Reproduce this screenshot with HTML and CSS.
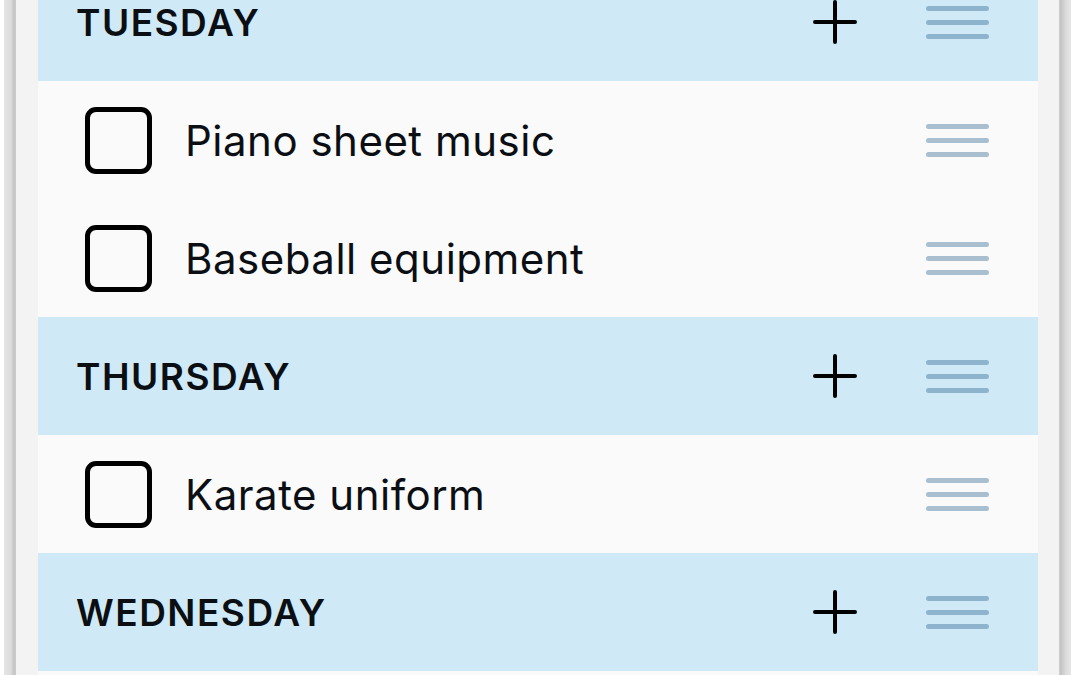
FILE: index.html
```html
<!DOCTYPE html>
<html lang="en">
<head>
  <meta charset="UTF-8">
  <meta name="viewport" content="width=device-width, initial-scale=1.0">
  <title>Packing list</title>
  <link rel="stylesheet" href="styles.css">
</head>
<body>
  <!-- Рамка телефона -->
  <div class="device">
    <div class="screen">
      <div class="list">

        <div class="day-header">
          <span class="day-title">TUESDAY</span>
          <svg class="add-icon" viewBox="0 0 44 44"><path d="M22 2v40M2 22h40"/></svg>
          <svg class="grip grip-dark" viewBox="0 0 63 33"><path d="M2.5 2.5h58M2.5 16.5h58M2.5 30.5h58"/></svg>
        </div>
        <div class="item">
          <span class="check"></span>
          <span class="item-title">Piano sheet music</span>
          <svg class="grip" viewBox="0 0 63 33"><path d="M2.5 2.5h58M2.5 16.5h58M2.5 30.5h58"/></svg>
        </div>
        <div class="item">
          <span class="check"></span>
          <span class="item-title">Baseball equipment</span>
          <svg class="grip" viewBox="0 0 63 33"><path d="M2.5 2.5h58M2.5 16.5h58M2.5 30.5h58"/></svg>
        </div>

        <div class="day-header">
          <span class="day-title">THURSDAY</span>
          <svg class="add-icon" viewBox="0 0 44 44"><path d="M22 2v40M2 22h40"/></svg>
          <svg class="grip grip-dark" viewBox="0 0 63 33"><path d="M2.5 2.5h58M2.5 16.5h58M2.5 30.5h58"/></svg>
        </div>
        <div class="item">
          <span class="check"></span>
          <span class="item-title">Karate uniform</span>
          <svg class="grip" viewBox="0 0 63 33"><path d="M2.5 2.5h58M2.5 16.5h58M2.5 30.5h58"/></svg>
        </div>

        <div class="day-header">
          <span class="day-title">WEDNESDAY</span>
          <svg class="add-icon" viewBox="0 0 44 44"><path d="M22 2v40M2 22h40"/></svg>
          <svg class="grip grip-dark" viewBox="0 0 63 33"><path d="M2.5 2.5h58M2.5 16.5h58M2.5 30.5h58"/></svg>
        </div>
        <div class="item"></div>

      </div>
    </div>
  </div>
</body>
</html>
```

FILE: styles.css
```css
:root {
  --header-bg: #cfeaf6;
  --item-bg: #fafafa;
  --frame-bg: #f3f3f3;
  --text-color: #0b0f14;
  --grip-light: #a9bfd0;
  --grip-dark: #8db3cd;
}

html,
body {
  margin: 0;
  padding: 0;
  height: 100%;
  overflow: hidden;
  background: #fff;
  font-family: 'Inter', 'Noto Sans', sans-serif;
  color: var(--text-color);
}

.device {
  margin-left: 4px;
  width: 1067px;
  height: 100%;
  padding: 0 12px;
  box-sizing: border-box;
  background: linear-gradient(to right,
    #e6e6e6 0, #dcdcdc 7px, #c4c4c4 10px, #cdcdcd 12px,
    transparent 12px, transparent calc(100% - 12px),
    #cdcdcd calc(100% - 12px), #c4c4c4 calc(100% - 10px), #dcdcdc calc(100% - 5px), #e6e6e6 100%);
}

.screen {
  height: 100%;
  padding: 0 21px 0 22px;
  background: var(--frame-bg);
  overflow: hidden;
}

/* список прокручен: верх первого заголовка уходит за край */
.list {
  margin-top: -37px;
}

.day-header,
.item {
  height: 118px;
  display: flex;
  align-items: center;
  padding-right: 49px;
}

.day-header {
  background: var(--header-bg);
  padding-left: 38px;
}

.item {
  background: var(--item-bg);
  padding-left: 47px;
}

.day-title {
  flex: 1;
  font-size: 37px;
  font-weight: 600;
  letter-spacing: 1.5px;
}

.add-icon {
  width: 44px;
  height: 44px;
  margin-right: 69px;
  fill: none;
  stroke: #000;
  stroke-width: 4;
  stroke-linecap: round;
}

.grip {
  width: 63px;
  height: 33px;
  fill: none;
  stroke: var(--grip-light);
  stroke-width: 5;
  stroke-linecap: round;
}

.grip-dark {
  stroke: var(--grip-dark);
}

.check {
  width: 67px;
  height: 67px;
  box-sizing: border-box;
  border: 5px solid #000;
  border-radius: 11px;
  margin-right: 33px;
  flex-shrink: 0;
}

.item-title {
  flex: 1;
  font-size: 42px;
  font-weight: 400;
  letter-spacing: 0.5px;
}
```
